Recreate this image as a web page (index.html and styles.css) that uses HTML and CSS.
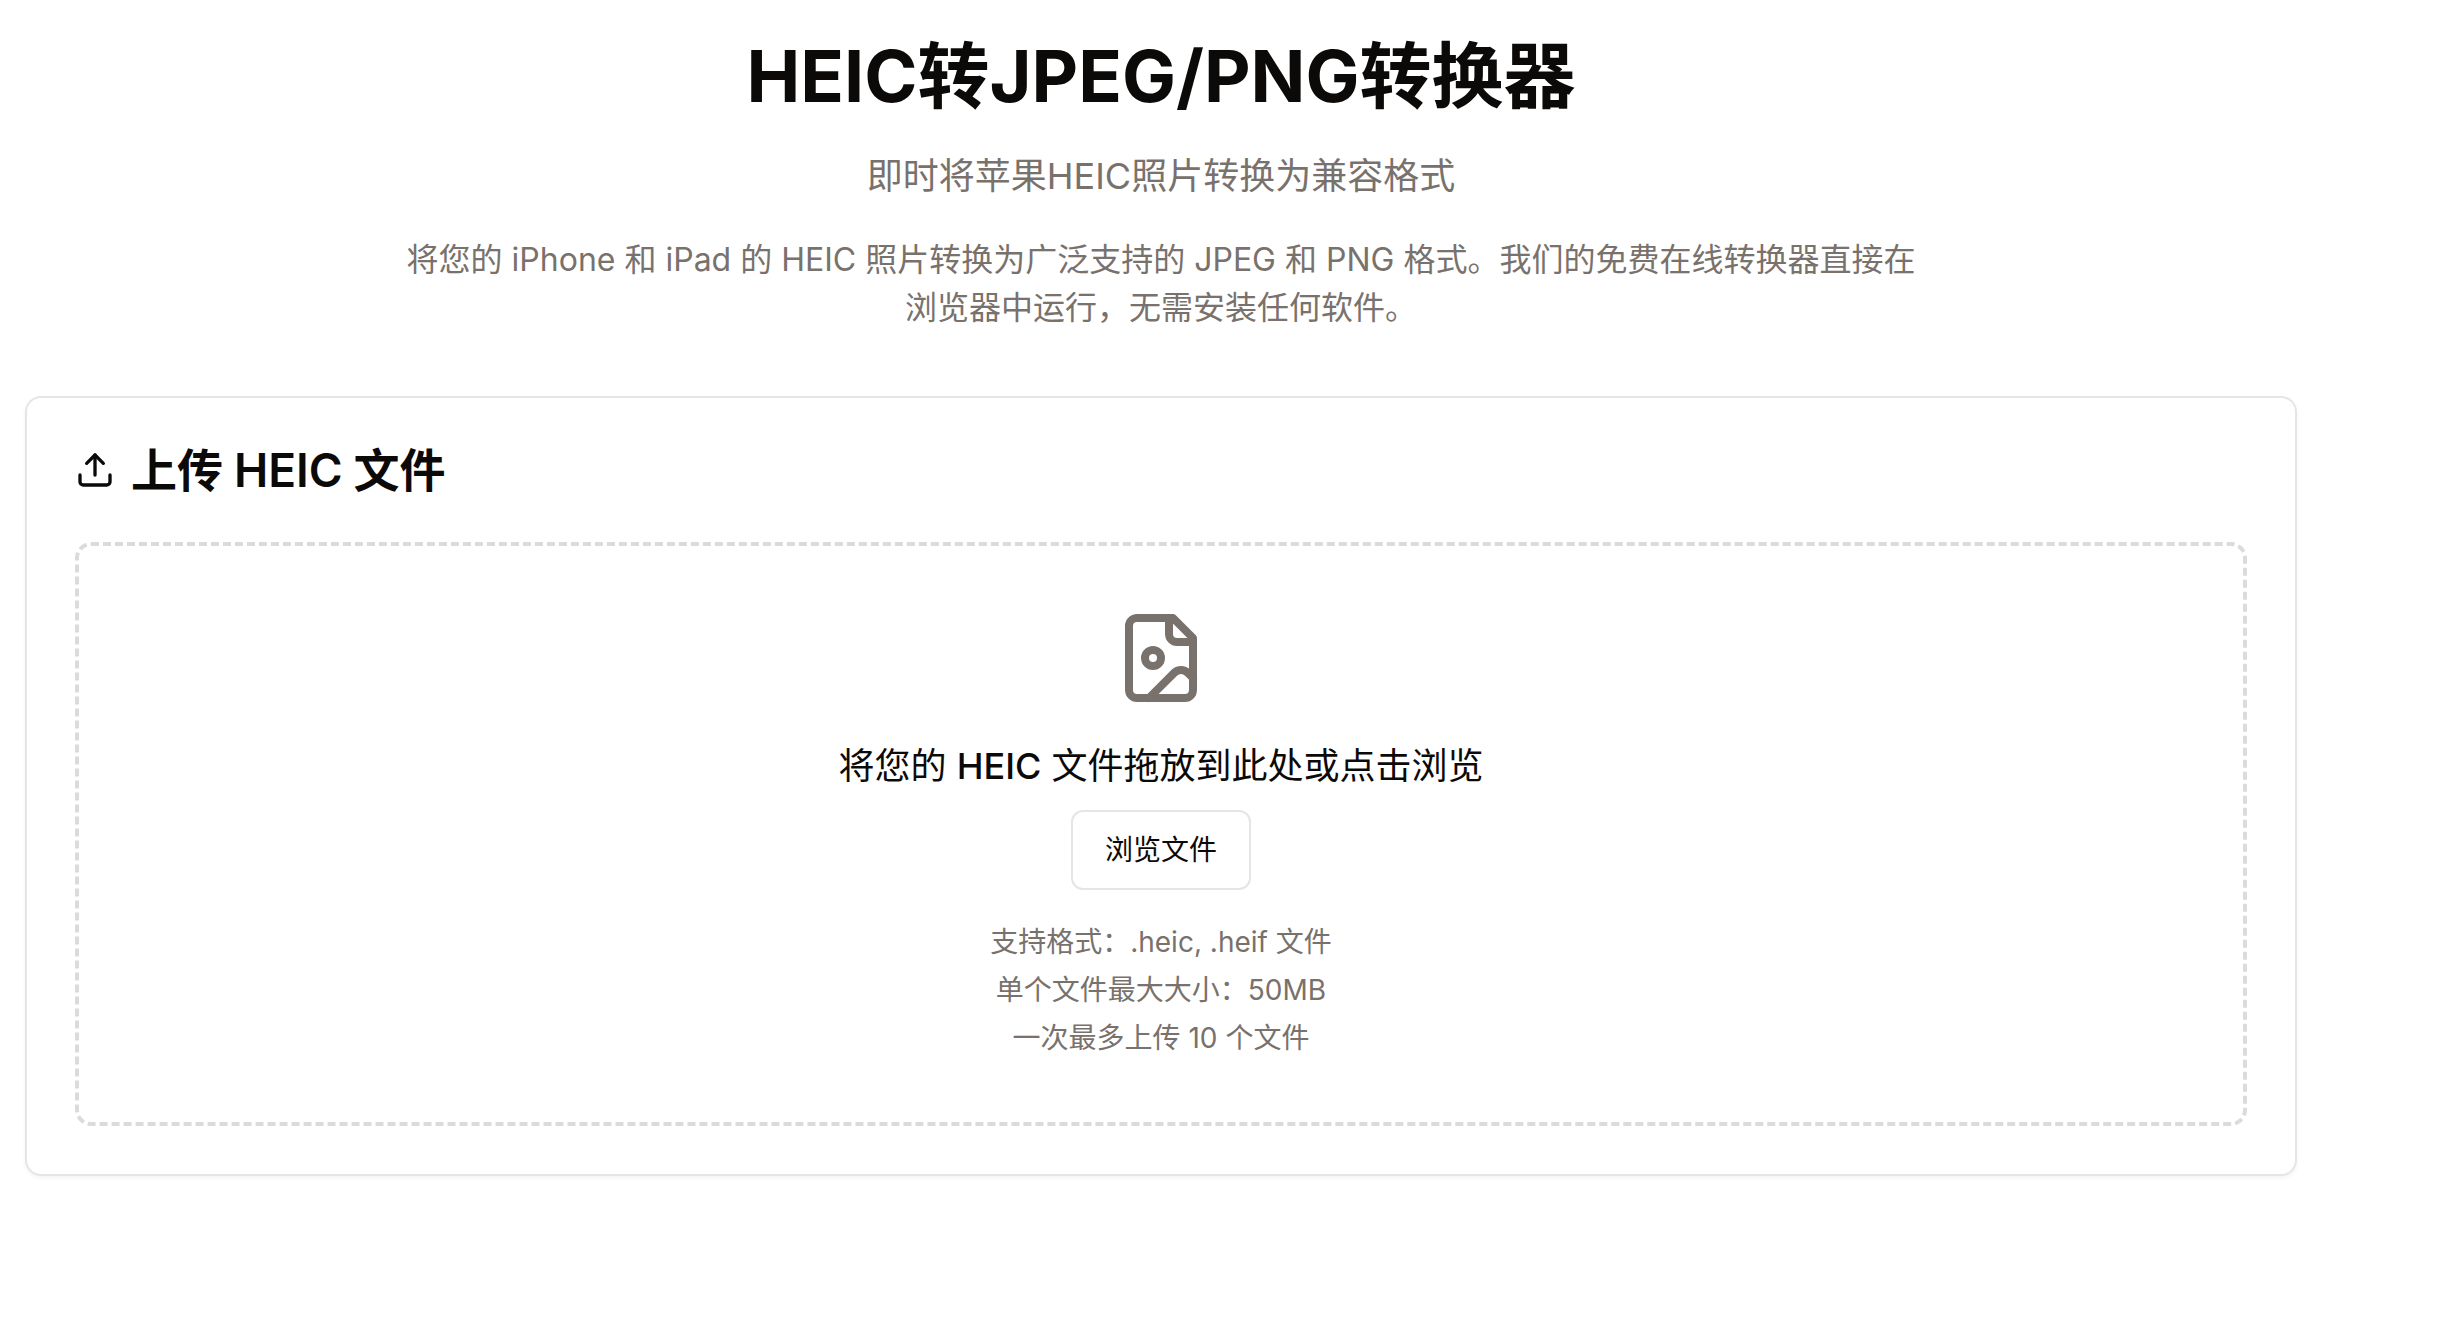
FILE: index.html
```html
<!DOCTYPE html>
<html lang="zh-CN">
  <head>
    <meta charset="UTF-8" />
    <meta name="viewport" content="width=device-width, initial-scale=1.0" />
    <title>HEIC转JPEG/PNG转换器</title>
    <link rel="stylesheet" href="styles.css">
  </head>
  <body>
    <main>
      <header>
        <h1>HEIC转JPEG/PNG转换器</h1>
        <p class="subtitle">即时将苹果HEIC照片转换为兼容格式</p>
        <p class="description">
          将您的 iPhone 和 iPad 的 HEIC 照片转换为广泛支持的 JPEG 和 PNG 格式。我们的免费在线转换器直接在浏览器中运行，无需安装任何软件。
        </p>
      </header>

      <section class="card">
        <div class="card-header">
          <svg class="icon" viewBox="0 0 24 24" aria-hidden="true">
            <path d="M21 15v4a2 2 0 0 1-2 2H5a2 2 0 0 1-2-2v-4" />
            <polyline points="17 8 12 3 7 8" />
            <line x1="12" x2="12" y1="3" y2="15" />
          </svg>
          <h2>上传 <span>HEIC</span> 文件</h2>
        </div>

        <div class="dropzone">
          <svg class="icon file-icon" viewBox="0 0 24 24" aria-hidden="true">
            <path d="M15 2H6a2 2 0 0 0-2 2v16a2 2 0 0 0 2 2h12a2 2 0 0 0 2-2V7Z" />
            <path d="M14 2v4a2 2 0 0 0 2 2h4" />
            <circle cx="10" cy="12" r="2" />
            <path d="m20 17-1.296-1.296a2.41 2.41 0 0 0-3.408 0L9 22" />
          </svg>
          <p class="prompt">将您的 <span>HEIC</span> 文件拖放到此处或点击浏览</p>
          <button type="button" onclick="fileInput.click()">浏览文件</button>
          <input type="file" id="fileInput" aria-label="浏览文件" accept=".heic,.heif" multiple hidden />
          <div class="hints">
            <p>支持格式：.heic, .heif 文件</p>
            <p>单个文件最大大小：50MB</p>
            <p>一次最多上传 10 个文件</p>
          </div>
        </div>
      </section>
    </main>

    <script>
      const fileInput = document.getElementById("fileInput");
    </script>
  </body>
</html>
```

FILE: styles.css
```css
body {
  font-family: Inter, "Noto Sans CJK SC", sans-serif;
  margin: 0;
  background-color: #ffffff;
  color: #0c0a09;
}

h1,
h2,
p {
  margin: 0;
}

main {
  padding: 36px 141px 36px 25px;
}

header {
  display: flex;
  flex-direction: column;
  align-items: center;
  gap: 32px;
  margin-bottom: 64px;
  text-align: center;
  color: #78716c;
}

h1 {
  font-size: 72px;
  line-height: 80px;
  font-weight: 700;
  color: #0c0a09;
}

.subtitle {
  font-size: 36px;
  line-height: 56px;
}

.description {
  max-width: 1536px;
  font-size: 32px;
  line-height: 48px;
}

.card {
  padding: 48px;
  border: 2px solid #e5e5e5;
  border-radius: 16px;
  box-shadow: 0 2px 4px rgba(0, 0, 0, 0.05);
}

.card-header {
  display: flex;
  align-items: center;
  gap: 16px;
  margin-bottom: 48px;
}

h2 {
  font-size: 46px;
  line-height: 48px;
  font-weight: 700;
}

h2 span {
  font-weight: 600;
}

.icon {
  width: 40px;
  height: 40px;
  fill: none;
  stroke: currentColor;
  stroke-width: 2;
  stroke-linecap: round;
  stroke-linejoin: round;
}

.dropzone {
  display: flex;
  flex-direction: column;
  align-items: center;
  padding: 64px;
  border: 4px dashed #dcdbda;
  border-radius: 16px;
  text-align: center;
}

.file-icon {
  width: 96px;
  height: 96px;
  margin-bottom: 32px;
  color: #78716c;
}

.prompt {
  margin-bottom: 16px;
  font-size: 36px;
  line-height: 56px;
}

.prompt span {
  font-weight: 500;
}

button {
  height: 80px;
  padding: 0 32px;
  border: 2px solid #e5e5e5;
  border-radius: 12px;
  background-color: #ffffff;
  color: #0c0a09;
  font-family: inherit;
  font-size: 28px;
  line-height: 40px;
  cursor: pointer;
}

button:hover {
  background-color: #f5f5f4;
}

.hints {
  display: flex;
  flex-direction: column;
  gap: 8px;
  margin-top: 32px;
  font-size: 28px;
  line-height: 40px;
  color: #78716c;
}
```
